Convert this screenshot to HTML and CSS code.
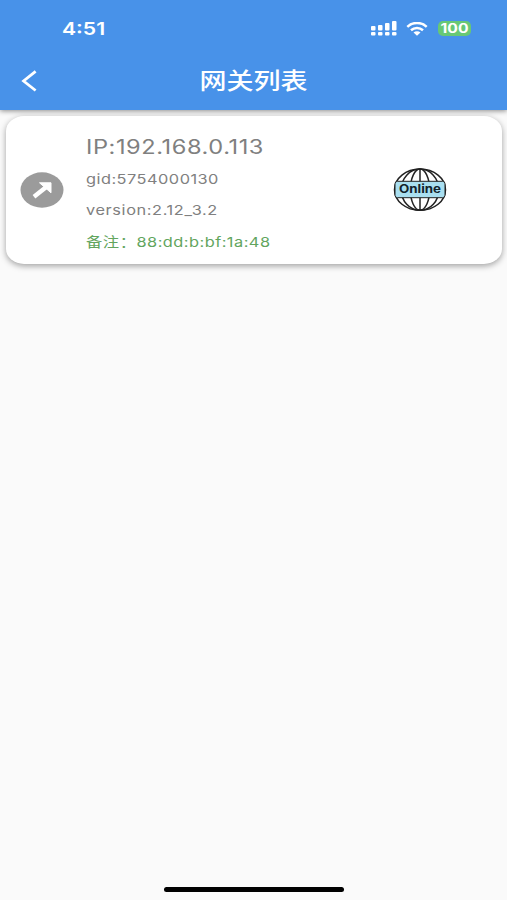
FILE: index.html
```
<!DOCTYPE html>
<html lang="zh-CN">
<head>
  <meta charset="UTF-8">
  <title>网关列表</title>
  <link rel="stylesheet" href="styles.css">
</head>
<body>
<div class="screen">
  <header class="top">
    <div class="status">
      <span class="time wide">4:51</span>
      <div class="status-icons">
        <svg class="signal" viewBox="0 0 26 15" width="26" height="15" fill="#fff">
          <rect x="0" y="5" width="4.5" height="4.5" rx="1"/>
          <rect x="7" y="4" width="4.5" height="5.5" rx="1"/>
          <rect x="14" y="2" width="4.5" height="7.5" rx="1"/>
          <rect x="21" y="0" width="4.5" height="9.5" rx="1"/>
          <rect x="0" y="11" width="4.5" height="3.5" rx="1"/>
          <rect x="7" y="11" width="4.5" height="3.5" rx="1"/>
          <rect x="14" y="11" width="4.5" height="3.5" rx="1"/>
          <rect x="21" y="11" width="4.5" height="3.5" rx="1"/>
        </svg>
        <svg class="wifi" viewBox="0 0 22 14" width="22" height="14">
          <path d="M1.3 4.8C6.8-.3 15.2-.3 20.7 4.8M5 8.2c3.4-3 8.6-3 12 0" fill="none" stroke="#fff" stroke-width="2.5"/>
          <path d="M7.5 10.5c2-1.6 5-1.6 7 0L11 13.7z" fill="#fff"/>
        </svg>
        <div class="battery"><span class="wide">100</span></div>
      </div>
    </div>
    <div class="nav">
      <svg class="back" viewBox="0 0 16 22" width="16" height="22">
        <path d="M14.6 1.3L2.6 11l12 9.5" fill="none" stroke="#fff" stroke-width="2.8"/>
      </svg>
      <h1 class="title wide">网关列表</h1>
    </div>
  </header>
  <main class="list">
    <div class="card">
      <svg class="arrow" viewBox="0 0 44 36" width="44" height="36">
        <ellipse cx="22" cy="18" rx="21.5" ry="17.7" fill="#9b9b9b"/>
        <path d="M14 24.8L27.5 14" stroke="#fff" stroke-width="4.4"/>
        <path d="M19.5 10.8H31V20.8z" fill="#fff" stroke="#fff" stroke-width="1" stroke-linejoin="round"/>
      </svg>
      <div class="info">
        <div class="ip"><span class="wide">IP:192.168.0.113</span></div>
        <div class="gid"><span class="wide">gid:5754000130</span></div>
        <div class="version"><span class="wide">version:2.12_3.2</span></div>
        <div class="note"><span class="wide">备注：88:dd:b:bf:1a:48</span></div>
      </div>
      <svg class="globe" viewBox="0 0 54 44" width="54" height="44">
        <g fill="none" stroke="#222" stroke-width="1.5">
          <ellipse cx="27" cy="21.7" rx="25.5" ry="20.6"/>
          <ellipse cx="27" cy="21.7" rx="18.8" ry="20.6"/>
          <ellipse cx="27" cy="21.7" rx="9.6" ry="20.6"/>
          <path d="M27 1v42"/>
        </g>
        <rect x="2" y="13.3" width="50" height="16.4" rx="2.5" fill="#a9dff0" stroke="#222" stroke-width="1"/>
        <text class="online" x="27" y="25.4" text-anchor="middle" textLength="42" lengthAdjust="spacingAndGlyphs">Online</text>
      </svg>
    </div>
  </main>
  <div class="home-bar"></div>
</div>
</body>
</html>
```
FILE: styles.css
```
body {margin: 0; background: #fafafa; font-family: Inter, "Noto Sans CJK SC", sans-serif;}
.screen {display: flex; flex-direction: column; height: 900px; overflow: hidden;}
.top {height: 110px; background: #4892e9; color: #fff; box-shadow: 0 1px 5px rgba(0,0,0,.45);}
.wide {display: inline-block; white-space: nowrap; transform: scaleX(1.21); transform-origin: left center;}

.status {display: flex; justify-content: space-between; align-items: center; height: 57px; padding: 0 36px 0 62px;}
.time {font-size: 17.5px; font-weight: 600;}
.status-icons {display: flex; align-items: center;}
.wifi {margin: 0 10px 0 9px;}
.battery {width: 33px; height: 15px; border-radius: 5px; background: #67c875; font-size: 13px; font-weight: 700; line-height: 15px; text-align: center;}
.battery .wide {transform-origin: center;}

.nav {display: grid; grid-template-columns: 60px 1fr 60px; align-items: center; height: 48px;}
.back {margin-left: 21px;}
.title {margin: 0; font-size: 22.3px; font-weight: 500; line-height: 30px; text-align: center; transform-origin: center;}

.list {flex: 1; padding: 6px 5px 0 6px;}
.card {display: flex; align-items: center; height: 148px; border-radius: 18px / 15px; background: #fff; box-shadow: 0 2px 6px rgba(0,0,0,.36);}
.arrow {margin-left: 14px;}
.info {width: 307px; margin-left: 22px; padding-top: 10px; color: #808080; font-size: 13.5px;}
.info div {height: 31px; line-height: 31px; letter-spacing: .4px;}
.info .ip {height: 33px; line-height: 33px; font-size: 19.5px; letter-spacing: .47px;}
.info .version {letter-spacing: .5px;}
.info .note {height: 33px; line-height: 33px; color: #62a55e;}
.online {font-size: 11.3px; font-weight: 700; fill: #12232c;}

.home-bar {width: 180px; height: 5px; margin: 0 auto 8px; border-radius: 3px; background: #000;}
```
